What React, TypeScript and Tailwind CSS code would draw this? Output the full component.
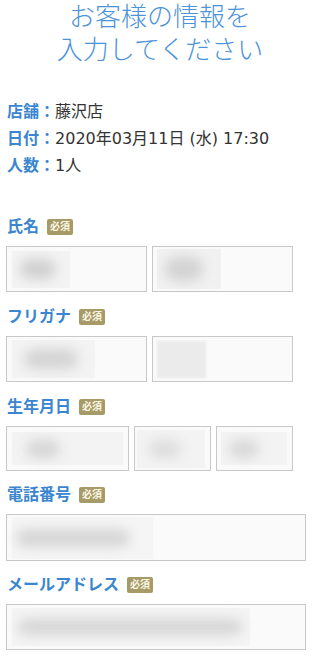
import React from "react";

const Badge = () => (
  <span className="inline-flex h-[16px] w-[26px] items-center justify-center rounded-[2px] bg-[#a69a67] text-[10px] leading-none font-bold text-[#fbf6e4]">
    必須
  </span>
);

const Label = ({ text, mt }: { text: string; mt: string }) => (
  <div className={`flex h-[24px] items-center gap-[8px] ${mt}`}>
    <span className="text-[16px] font-bold leading-[24px] text-[#3b86cf]">{text}</span>
    <Badge />
  </div>
);

export default function App() {
  return (
    <div
      className="w-[320px] bg-white pb-[5px] text-[#333]"
      style={{ fontFamily: '"DejaVu Sans", "Noto Sans CJK JP", sans-serif' }}
    >
      <h1 className="pt-[1px] text-center text-[26px] font-light leading-[33px] text-[#4c93d9]">
        <div>お客様の情報を</div>
        <div>入力してください</div>
      </h1>

      <div className="mt-[31px] px-[7px] text-[16px] leading-[27px]">
        <div>
          <span className="font-bold text-[#3b86cf]">店舗：</span>藤沢店
        </div>
        <div>
          <span className="font-bold text-[#3b86cf]">日付：</span>2020年03月11日 (水) 17:30
        </div>
        <div>
          <span className="font-bold text-[#3b86cf]">人数：</span>1人
        </div>
      </div>

      <div className="px-[6px]">
        <div className="pl-[1px]">
          <Label text="氏名" mt="mt-[36px]" />
        </div>
        <div className="mt-[7px] flex gap-[5px]">
          <div className="flex h-[46px] w-[141px] items-center border border-[#c8c8c8] bg-[#fafafa] pl-[5px]">
            <div className="flex h-[37px] w-[58px] items-center bg-[#f3f3f3]">
              <div className="ml-[8px] h-[20px] w-[36px] rounded-full bg-[#d0d0d0] blur-[6px]" />
            </div>
          </div>
          <div className="flex h-[46px] w-[141px] items-center border border-[#c8c8c8] bg-[#fafafa] pl-[4px]">
            <div className="flex h-[40px] w-[64px] items-center bg-[#f1f1f1]">
              <div className="ml-[8px] h-[24px] w-[38px] rounded-full bg-[#d3d3d3] blur-[6px]" />
            </div>
          </div>
        </div>

        <div className="pl-[1px]">
          <Label text="フリガナ" mt="mt-[13px]" />
        </div>
        <div className="mt-[7px] flex gap-[5px]">
          <div className="flex h-[46px] w-[141px] items-center border border-[#c8c8c8] bg-[#fafafa] pl-[5px]">
            <div className="flex h-[38px] w-[83px] items-center bg-[#f3f3f3]">
              <div className="ml-[12px] h-[20px] w-[54px] rounded-full bg-[#d4d4d4] blur-[6px]" />
            </div>
          </div>
          <div className="flex h-[46px] w-[141px] items-center border border-[#c8c8c8] bg-[#fafafa] pl-[4px]">
            <div className="h-[37px] w-[49px] bg-[#ebebeb] blur-[1px]" />
          </div>
        </div>

        <div className="pl-[1px]">
          <Label text="生年月日" mt="mt-[13px]" />
        </div>
        <div className="mt-[7px] flex gap-[5px]">
          <div className="flex h-[45px] w-[123px] items-center border border-[#c8c8c8] bg-[#fafafa] pl-[5px]">
            <div className="flex h-[33px] w-[111px] items-center bg-[#f3f3f3]">
              <div className="ml-[14px] h-[18px] w-[34px] rounded-full bg-[#d6d6d6] blur-[6px]" />
            </div>
          </div>
          <div className="flex h-[45px] w-[77px] items-center border border-[#c8c8c8] bg-[#fafafa] pl-[2px]">
            <div className="flex h-[38px] w-[68px] items-center bg-[#f3f3f3]">
              <div className="ml-[12px] h-[18px] w-[32px] rounded-full bg-[#dddddd] blur-[6px]" />
            </div>
          </div>
          <div className="flex h-[45px] w-[77px] items-center border border-[#c8c8c8] bg-[#fafafa] pl-[4px]">
            <div className="flex h-[33px] w-[66px] items-center bg-[#f3f3f3]">
              <div className="ml-[8px] h-[18px] w-[30px] rounded-full bg-[#d8d8d8] blur-[6px]" />
            </div>
          </div>
        </div>

        <div className="pl-[1px]">
          <Label text="電話番号" mt="mt-[12px]" />
        </div>
        <div className="mt-[7px] flex h-[47px] w-[300px] items-center border border-[#c8c8c8] bg-[#fafafa] pl-[5px]">
          <div className="flex h-[42px] w-[141px] items-center bg-[#f5f5f5]">
            <div className="ml-[4px] h-[18px] w-[114px] rounded-full bg-[#d6d6d6] blur-[6px]" />
          </div>
        </div>

        <div className="pl-[1px]">
          <Label text="メールアドレス" mt="mt-[12px]" />
        </div>
        <div className="mt-[7px] flex h-[46px] w-[300px] items-center border border-[#c8c8c8] bg-[#fafafa] pl-[5px]">
          <div className="flex h-[38px] w-[238px] items-center bg-[#f4f4f4]">
            <div className="ml-[6px] h-[16px] w-[224px] rounded-full bg-[#d6d6d6] blur-[6px]" />
          </div>
        </div>
      </div>
    </div>
  );
}
